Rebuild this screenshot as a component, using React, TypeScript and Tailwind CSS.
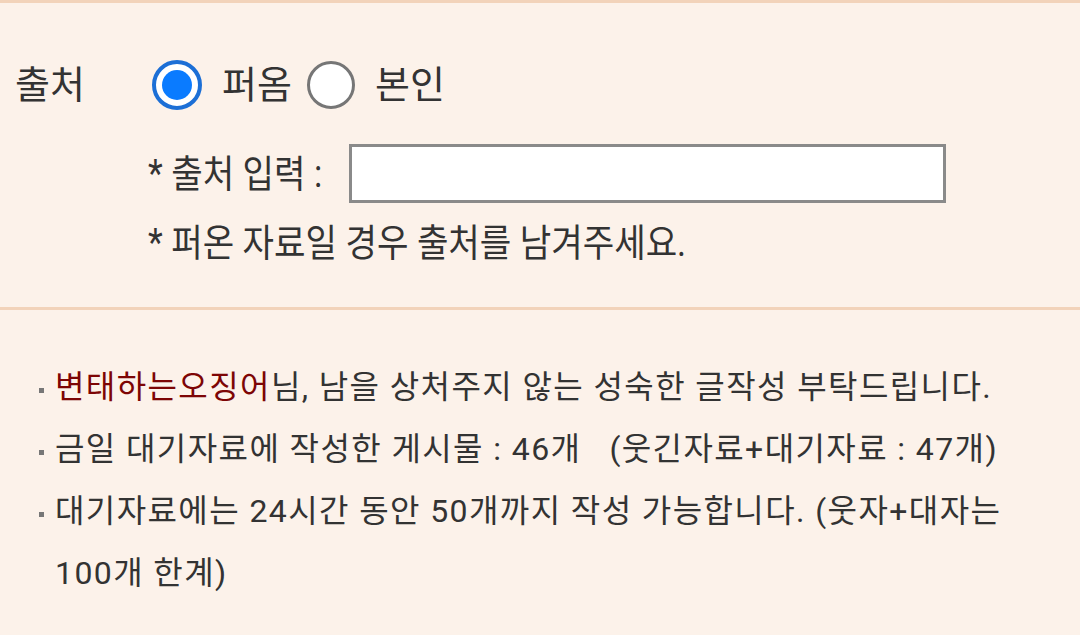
import React from 'react';

const font = { fontFamily: 'Roboto, "Noto Sans CJK KR", "Noto Sans", sans-serif' };

const Radio = ({ checked, label }: { checked?: boolean; label: string }) => (
  <label className="flex items-center">
    {checked ? (
      <span className="w-[50px] h-[50px] rounded-full border-[4px] border-[#1c6fd6] bg-white flex items-center justify-center">
        <span className="w-[30px] h-[30px] rounded-full bg-[#0a7bff]" />
      </span>
    ) : (
      <span className="w-[48px] h-[48px] rounded-full border-[3px] border-[#767676] bg-white" />
    )}
    <span className="ml-[20px] text-[38px] leading-[50px] text-[#333]">{label}</span>
  </label>
);

const Bullet = ({ children }: { children: React.ReactNode }) => (
  <li className="relative pl-[55px] pr-[50px]">
    <span className="absolute left-[39px] top-[32px] w-[5px] h-[5px] bg-[#777]" />
    {children}
  </li>
);

export default function App() {
  return (
    <div className="w-[1080px] h-[635px] overflow-hidden bg-[#fcf2ea] border-t-[3px] border-[#f2d3ba]" style={font}>
      <div className="h-[307px] border-b-[3px] border-[#f2d3ba] pt-[52px]">
        <div className="flex items-center h-[60px]">
          <span className="pl-[15px] w-[152px] text-[38px] leading-[50px] text-[#333]">출처</span>
          <Radio checked label="퍼옴" />
          <span className="w-[15px]" />
          <Radio label="본인" />
        </div>
        <div className="flex items-center mt-[29px] pl-[148px]">
          <span className="text-[38px] leading-[44px] text-[#333] inline-block w-[201px] whitespace-nowrap">
            <span className="inline-block scale-x-[0.9] origin-left">* 출처 입력 :</span>
          </span>
          <input className="w-[597px] h-[59px] bg-white border-[3px] border-[#8a8a8a] outline-none" />
        </div>
        <div className="pl-[148px] mt-[18px] text-[38px] leading-[44px] text-[#333] whitespace-nowrap">
          <span className="inline-block scale-x-[0.9] origin-left">* 퍼온 자료일 경우 출처를 남겨주세요.</span>
        </div>
      </div>
      <ul className="pt-[46px] text-[32px] leading-[62px] tracking-[1.4px] text-[#333]">
        <Bullet>
          <span className="text-[#7d0505]">변태하는오징어</span>님, 남을 상처주지 않는 성숙한 글작성 부탁드립니다.
        </Bullet>
        <Bullet>
          금일 대기자료에 작성한 게시물 : 46개&nbsp;&nbsp; (웃긴자료+대기자료 : 47개)
        </Bullet>
        <Bullet>대기자료에는 24시간 동안 50개까지 작성 가능합니다. (웃자+대자는 100개 한계)</Bullet>
      </ul>
    </div>
  );
}
